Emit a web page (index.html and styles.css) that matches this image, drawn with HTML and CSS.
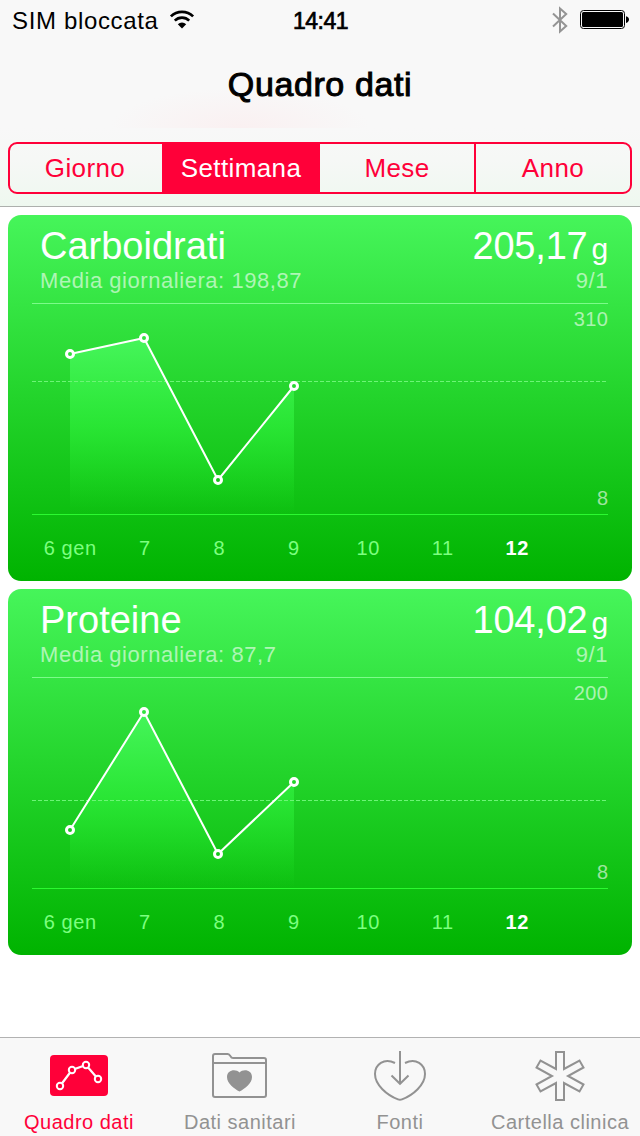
FILE: index.html
```
<!DOCTYPE html>
<html lang="it">
<head>
    <meta charset="UTF-8">
    <meta name="viewport" content="width=device-width, initial-scale=1.0">
    <title>Quadro dati</title>
    <link rel="stylesheet" href="styles.css">
</head>
<body>
    <div class="app">
        <header class="header">
            <div class="status-bar">
                <div class="status-left">
                    <span>SIM bloccata</span>
                    <svg class="wifi" width="26" height="20" viewBox="0 0 26 20">
                        <path d="M1.9 6.4A15.8 15.8 0 0 1 24.1 6.4" fill="none" stroke="#000" stroke-width="2.7"/>
                        <path d="M5.8 10.6A10.2 10.2 0 0 1 20.200 10.6" fill="none" stroke="#000" stroke-width="2.6"/>
                        <path d="M13 18.500L8.800 14.300A6 6 0 0 1 17.200 14.300Z" fill="#000"/>
                    </svg>
                </div>
                <div class="status-time">14:41</div>
                <div class="status-right">
                    <svg width="16" height="28" viewBox="0 0 16 28">
                        <path d="M1 7.5L14.2 20L8 25.6V2.4L14.2 8L1 20.5" fill="none" stroke="#949494" stroke-width="2"/>
                    </svg>
                    <svg width="49" height="20" viewBox="0 0 49 20">
                        <rect x="0.5" y="0.5" width="44" height="18" rx="3" fill="none" stroke="#000"/>
                        <rect x="2" y="2" width="41" height="15" rx="1.5"/>
                        <path d="M46 6.2C50 7 50 12.2 46 13Z"/>
                    </svg>
                </div>
            </div>
            <h1 class="title">Quadro dati</h1>
            <div class="segments">
                <div class="segment">Giorno</div>
                <div class="segment active">Settimana</div>
                <div class="segment">Mese</div>
                <div class="segment">Anno</div>
            </div>
        </header>

        <main class="cards">
            <section class="card">
                <div class="card-row">
                    <h2>Carboidrati</h2>
                    <div class="value">205,17<span class="unit">g</span></div>
                </div>
                <div class="card-row sub">
                    <span>Media giornaliera: 198,87</span>
                    <span>9/1</span>
                </div>
                <svg class="chart" width="576" height="212" viewBox="0 0 576 212">
                    <defs>
                        <linearGradient id="area" gradientUnits="userSpaceOnUse" x1="0" y1="35" x2="0" y2="211">
                            <stop offset="0" stop-color="#46f55b"/>
                            <stop offset="0.5" stop-color="#2ceb38" stop-opacity="0.8"/>
                            <stop offset="1" stop-color="#1fe426" stop-opacity="0"/>
                        </linearGradient>
                    </defs>
                    <path class="line-top" d="M0 0.5H576"/>
                    <path class="line-bottom" d="M0 211.5H576"/>
                    <path d="M38 51L112 35L186 177L262 83V211H38Z" fill="url(#area)"/>
                    <path class="line-avg" d="M0 78.5H574"/>
                    <path class="series" d="M38 51L112 35L186 177L262 83"/>
                    <g class="points">
                        <circle cx="38" cy="51" r="3.5" fill="#2fe03b"/>
                        <circle cx="112" cy="35" r="3.5" fill="#32e33f"/>
                        <circle cx="186" cy="177" r="3.5" fill="#13c818"/>
                        <circle cx="262" cy="83" r="3.5" fill="#27d831"/>
                    </g>
                    <text class="scale" x="576.5" y="23">310</text>
                    <text class="scale" x="576.5" y="202">8</text>
                </svg>
                <div class="axis">
                    <span>6 gen</span>
                    <span>7</span>
                    <span>8</span>
                    <span>9</span>
                    <span>10</span>
                    <span>11</span>
                    <span class="today">12</span>
                </div>
            </section>

            <section class="card">
                <div class="card-row">
                    <h2>Proteine</h2>
                    <div class="value">104,02<span class="unit">g</span></div>
                </div>
                <div class="card-row sub">
                    <span>Media giornaliera: 87,7</span>
                    <span>9/1</span>
                </div>
                <svg class="chart" width="576" height="212" viewBox="0 0 576 212">
                    <path class="line-top" d="M0 0.5H576"/>
                    <path class="line-bottom" d="M0 211.5H576"/>
                    <path d="M38 153L112 35L186 177L262 105V211H38Z" fill="url(#area)"/>
                    <path class="line-avg" d="M0 123.5H574"/>
                    <path class="series" d="M38 153L112 35L186 177L262 105"/>
                    <g class="points">
                        <circle cx="38" cy="153" r="3.5" fill="#18cd1e"/>
                        <circle cx="112" cy="35" r="3.5" fill="#32e33f"/>
                        <circle cx="186" cy="177" r="3.5" fill="#13c818"/>
                        <circle cx="262" cy="105" r="3.5" fill="#23d52b"/>
                    </g>
                    <text class="scale" x="576.5" y="23">200</text>
                    <text class="scale" x="576.5" y="202">8</text>
                </svg>
                <div class="axis">
                    <span>6 gen</span>
                    <span>7</span>
                    <span>8</span>
                    <span>9</span>
                    <span>10</span>
                    <span>11</span>
                    <span class="today">12</span>
                </div>
            </section>
        </main>

        <nav class="tab-bar">
            <div class="tab active">
                <svg width="60" height="56" viewBox="0 0 60 56">
                    <rect x="1" y="8" width="58" height="41" rx="4" fill="#ff0039"/>
                    <path d="M11 39L23 23L37 18L49 32" fill="none" stroke="#fff" stroke-width="2.2"/>
                    <g fill="#ff0039" stroke="#fff" stroke-width="2">
                        <circle cx="11" cy="39" r="3.2"/>
                        <circle cx="23" cy="23" r="3.2"/>
                        <circle cx="37" cy="18" r="3.2"/>
                        <circle cx="49" cy="32" r="3.2"/>
                    </g>
                </svg>
                <span>Quadro dati</span>
            </div>
            <div class="tab">
                <svg width="60" height="56" viewBox="0 0 60 56">
                    <path d="M3 48V9Q3 7 5 7H17.500Q19 7 19.800 8.200L21.200 10.200Q22 11 23.500 11H54Q56 11 56 13V48Q56 50 54 50H5Q3 50 3 48ZM3 16H56" fill="none" stroke="#929292" stroke-width="2"/>
                    <path d="M29.500 44.5C24.500 42 17 36.500 17 30C17 22.500 26 21.500 29.500 25.500C33 21.500 42 22.500 42 30C42 36.500 34.500 42 29.500 44.500Z" fill="#929292"/>
                </svg>
                <span>Dati sanitari</span>
            </div>
            <div class="tab">
                <svg width="60" height="56" viewBox="0 0 60 56" fill="none" stroke="#929292" stroke-width="2">
                    <path d="M25 16C14 10.500 5 17.500 5 27C5 38 17 48 28 52.400Q30 53.200 32 52.400C43 48 55 38 55 27C55 17.500 46 10.500 35 16"/>
                    <path d="M30 4V36M21.5 28.500L30 36.800L38.500 28.500"/>
                </svg>
                <span>Fonti</span>
            </div>
            <div class="tab">
                <svg width="60" height="56" viewBox="0 0 60 56" fill="none" stroke="#929292" stroke-width="2">
                    <path d="M26 5H34V22L49.500 13.500L53.500 20.500L38 29L53.500 37.500L49.500 44.500L34 36V53H26V36L10.500 44.500L6.500 37.500L22 29L6.500 20.500L10.500 13.500L26 22Z"/>
                </svg>
                <span>Cartella clinica</span>
            </div>
        </nav>
    </div>
</body>
</html>
```
FILE: styles.css
```
* {
    margin: 0;
    padding: 0;
    box-sizing: border-box;
}

body {
    font-family: "Liberation Sans", Arial, sans-serif;
    background: #fff;
    color: #000;
}

svg {
    display: block;
}

.app {
    display: flex;
    flex-direction: column;
    width: 640px;
    height: 1136px;
    overflow: hidden;
}

.header {
    height: 207px;
    padding: 0 8px;
    border-bottom: 1px solid #adb0ad;
    background:
        linear-gradient(#f8f8f8, #f6f8f6 40%, #eef8ef) 0 128px / 100% 79px no-repeat,
        radial-gradient(ellipse 130px 40px at 240px 128px, #faf0f1, #f8f8f8) #f8f8f8;
}

.status-bar {
    display: grid;
    grid-template-columns: 1fr auto 1fr;
    align-items: center;
    height: 40px;
    padding: 0 3px 0 4px;
    font-size: 24px;
    letter-spacing: 0.65px;
}

.status-left {
    display: flex;
    align-items: center;
    gap: 10px;
}

.status-left span,
.status-time {
    padding-top: 2px;
}

.status-time {
    font-size: 23px;
    letter-spacing: -0.5px;
    -webkit-text-stroke: 0.7px #000;
}

.status-right {
    display: flex;
    justify-content: flex-end;
    align-items: center;
    gap: 12px;
}

.title {
    height: 102px;
    line-height: 89px;
    text-align: center;
    font-size: 34px;
    font-weight: 400;
    letter-spacing: 0.6px;
    -webkit-text-stroke: 1px #000;
}

.segments {
    display: grid;
    grid-template-columns: 152px 158px 154px 156px;
    height: 52px;
    border: 2px solid #ff0039;
    border-radius: 9px;
    overflow: hidden;
}

.segment {
    line-height: 49px;
    text-align: center;
    font-size: 26px;
    letter-spacing: 0.4px;
    color: #ff0039;
}

.segment:first-child {
    padding-right: 2px;
}

.segment:last-child {
    border-left: 2px solid #ff0039;
}

.segment.active {
    background: #ff0039;
    color: #fff;
}

.cards {
    flex: 1;
    display: flex;
    flex-direction: column;
    gap: 8px;
    padding: 8px;
}

.card {
    height: 366px;
    padding: 8px 24px 0;
    border-radius: 13px;
    background: linear-gradient(#46f55a, #23d42b 50%, #00b300);
    color: #fff;
}

.card-row {
    display: flex;
    justify-content: space-between;
    height: 46px;
    padding-left: 8px;
    line-height: 46px;
}

.card h2 {
    font-size: 38px;
    font-weight: 400;
}

.value {
    font-size: 38px;
    letter-spacing: -0.2px;
}

.unit {
    margin-left: 4px;
    font-size: 30px;
}

.card-row.sub {
    height: 34px;
    line-height: 24px;
    font-size: 22px;
    letter-spacing: 0.55px;
    color: rgba(255, 255, 255, 0.6);
}

.line-top {
    stroke: #7cfb8a;
}

.line-bottom {
    stroke: #2bf930;
}

.line-avg {
    stroke: #6cf576;
    stroke-dasharray: 4 2;
}

.series {
    fill: none;
    stroke: #fff;
    stroke-width: 2;
    stroke-linejoin: round;
}

.points circle {
    stroke: #fff;
    stroke-width: 3;
}

.scale {
    font-size: 20px;
    letter-spacing: 0.5px;
    text-anchor: end;
    fill: #fff;
    fill-opacity: 0.6;
}

.axis {
    display: grid;
    grid-template-columns: repeat(7, 74.5px);
    padding-left: 1px;
    line-height: 66px;
    text-align: center;
    font-size: 20px;
    letter-spacing: 0.6px;
    color: #7dff80;
}

.today {
    font-weight: 700;
    color: #fff;
}

.tab-bar {
    display: grid;
    grid-template-columns: repeat(4, 160px);
    height: 99px;
    border-top: 1px solid #b2b2b2;
    background: #f8f8f8;
}

.tab {
    display: flex;
    flex-direction: column;
    align-items: center;
    padding-top: 9px;
    font-size: 20px;
    line-height: 38px;
    letter-spacing: 0.5px;
    white-space: nowrap;
    color: #929292;
}

.tab.active {
    padding-right: 2px;
    color: #ff0039;
}
```
